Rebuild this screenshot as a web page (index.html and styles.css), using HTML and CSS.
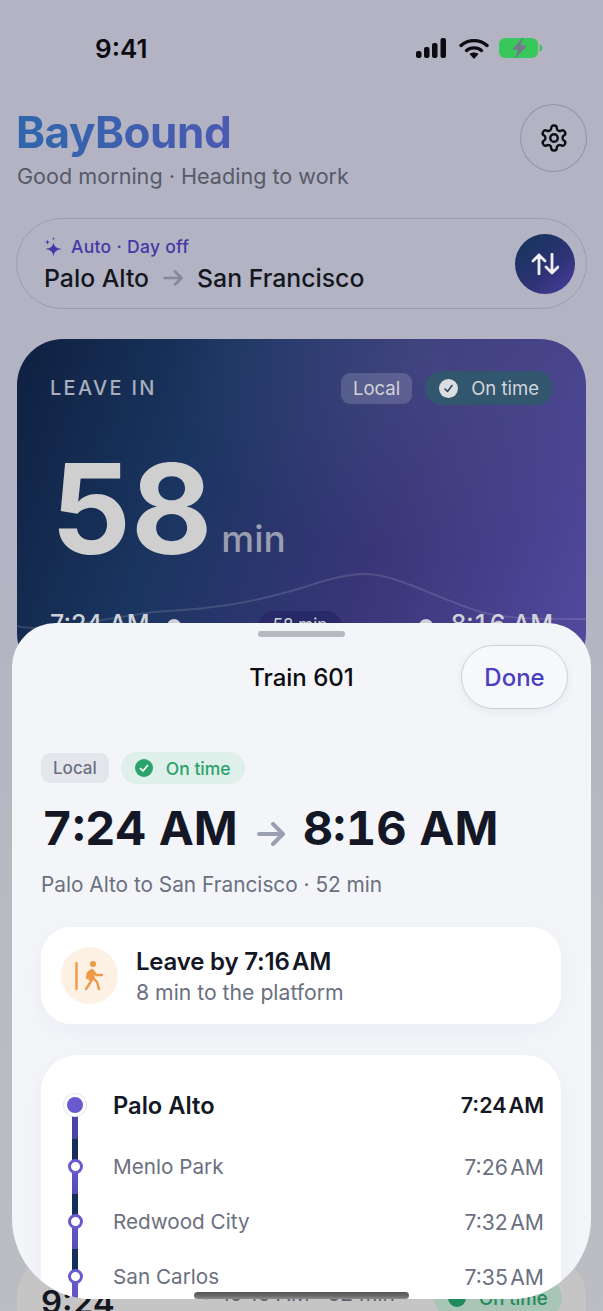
FILE: index.html
```html
<!DOCTYPE html>
<html lang="en">
<head>
<meta charset="utf-8">
<title>BayBound</title>
<link rel="stylesheet" href="styles.css">
</head>
<body>
<div class="phone">
  <div class="status">
    <span class="clock">9:41</span>
    <div class="status-icons">
      <svg class="signal" width="30" height="20" viewBox="0 0 30 20"><rect x="0" y="13" width="5.5" height="7" rx="2"/><rect x="8" y="9" width="5.5" height="11" rx="2"/><rect x="16" y="5" width="5.5" height="15" rx="2"/><rect x="24.500" y="0" width="5.500" height="20" rx="2"/></svg>
      <svg class="wifi" width="30" height="21" viewBox="0 0 30 21" fill="none"><path d="M2 7.500C9.500 1 20.500 1 28 7.500" stroke="#0b0b10" stroke-width="3.400" stroke-linecap="round"/><path d="M7.500 12.500C11.500 9 18.500 9 22.500 12.500" stroke="#0b0b10" stroke-width="3.400" stroke-linecap="round"/><path d="M15 21l-4.500-5c2.500-2 6.500-2 9 0z" fill="#0b0b10"/></svg>
      <svg class="battery" width="44" height="22" viewBox="0 0 44 22"><rect x="0" y="1" width="39" height="20" rx="6" fill="#38c75b"/><path d="M40.500 7.500c2 .5 3 2 3 3.500s-1 3-3 3.500z" fill="#38c75b"/><path d="M24.500 0L13 12.500h6L16 22l12-13.500h-6.500z" fill="#77778c"/></svg>
    </div>
  </div>

  <header class="top">
    <div>
      <h1 class="brand">BayBound</h1>
      <p class="greet">Good morning · Heading to work</p>
    </div>
    <button class="gear" aria-label="Settings">
      <svg width="30" height="30" viewBox="0 0 24 24" fill="none" stroke="#0d0d14" stroke-width="1.900" stroke-linecap="round" stroke-linejoin="round"><path d="M12.220 2h-.44a2 2 0 0 0-2 2v.18a2 2 0 0 1-1 1.730l-.43.250a2 2 0 0 1-2 0l-.15-.08a2 2 0 0 0-2.730.730l-.22.380a2 2 0 0 0 .730 2.730l.150.100a2 2 0 0 1 1 1.720v.510a2 2 0 0 1-1 1.740l-.15.090a2 2 0 0 0-.730 2.730l.220.380a2 2 0 0 0 2.730.730l.150-.08a2 2 0 0 1 2 0l.430.250a2 2 0 0 1 1 1.730V20a2 2 0 0 0 2 2h.440a2 2 0 0 0 2-2v-.18a2 2 0 0 1 1-1.730l.430-.250a2 2 0 0 1 2 0l.150.080a2 2 0 0 0 2.730-.730l.220-.390a2 2 0 0 0-.730-2.730l-.150-.080a2 2 0 0 1-1-1.740v-.500a2 2 0 0 1 1-1.740l.150-.090a2 2 0 0 0 .730-2.730l-.220-.380a2 2 0 0 0-2.730-.730l-.150.080a2 2 0 0 1-2 0l-.430-.250a2 2 0 0 1-1-1.730V4a2 2 0 0 0-2-2z"/><circle cx="12" cy="12" r="3"/></svg>
    </button>
  </header>

  <section class="route">
    <div class="route-text">
      <div class="auto">
        <svg width="18" height="20" viewBox="0 0 18 20" fill="#4438a8"><path d="M9.500 5.500c.8 4 2.500 5.500 8 6.500-5.500 1-7.200 2.500-8 7.500-.8-5-2.500-6.500-8-7.500 5.500-1 7.200-2.500 8-6.500z"/><path d="M3.500 2.500l.6 2 2 .6-2 .6-.6 2-.6-2-2-.6 2-.6zM9.500 0l.4 1.400 1.400.4-1.400.4-.4 1.400-.4-1.400-1.400-.4 1.400-.4z"/></svg>
        <span>Auto · Day off</span>
      </div>
      <div class="route-names">
        <span>Palo Alto</span>
        <svg width="20" height="16" viewBox="0 0 20 16" fill="none" stroke="#868799" stroke-width="2.600" stroke-linecap="round" stroke-linejoin="round"><path d="M1.500 8h17M12 1.500L18.500 8 12 14.500"/></svg>
        <span>San Francisco</span>
      </div>
    </div>
    <button class="swap" aria-label="Swap direction">
      <svg width="28" height="22" viewBox="0 0 28 22" fill="none" stroke="#f0f0f4" stroke-width="2.800" stroke-linecap="round" stroke-linejoin="round"><path d="M8 21V2M2 8l6-6 6 6M21 1v19M15 14l6 6 6-6"/></svg>
    </button>
  </section>

  <section class="hero">
    <svg class="wave" width="569" height="80" viewBox="0 0 569 80" fill="none"><path d="M0 57C30 64 70 52 137 43C190 40 230 36 291 17C320 7 335 5 348 5C380 5 420 30 464 43C490 50 520 50 569 50" stroke="#ffffff" stroke-opacity=".13" stroke-width="2"/></svg>
    <div class="hero-top">
      <span class="leave">LEAVE IN</span>
      <div class="hero-pills">
        <span class="pill-local-d">Local</span>
        <span class="pill-time-d">
          <svg width="19" height="19" viewBox="0 0 19 19"><circle cx="9.500" cy="9.500" r="9.500" fill="#dcdde0"/><path d="M6 10l2.500 2.500L13 6.500" fill="none" stroke="#30475f" stroke-width="1.600" stroke-linecap="round" stroke-linejoin="round"/></svg>
          <span>On time</span>
        </span>
      </div>
    </div>
    <div class="count"><span class="num">58</span><span class="unit">min</span></div>
    <div class="journey">
      <div class="j-end"><span class="j-time">7:24 AM</span><i class="j-dot"></i></div>
      <span class="j-pill">58 min</span>
      <div class="j-end"><i class="j-dot"></i><span class="j-time j-tab">8:16 AM</span></div>
    </div>
  </section>

  <section class="later">
    <span class="later-time">9:24</span>
    <span class="later-info">→ 10:16 AM · 52 min</span>
    <span class="later-pill"><i class="later-dot"></i><span>On time</span></span>
  </section>

  <div class="sheet">
    <div class="handle"></div>
    <div class="sheet-head">
      <span></span>
      <h2 class="sheet-title">Train 601</h2>
      <button class="done">Done</button>
    </div>
    <div class="sheet-body">
      <div class="tags">
        <span class="tag-local">Local</span>
        <span class="tag-time">
          <svg width="18" height="18" viewBox="0 0 18 18"><circle cx="9" cy="9" r="9" fill="#2aa36c"/><path d="M5.500 9.500l2.500 2.500 4.500-5.500" fill="none" stroke="#fff" stroke-width="1.700" stroke-linecap="round" stroke-linejoin="round"/></svg>
          <span>On time</span>
        </span>
      </div>
      <div class="times">
        <span>7:24 AM</span>
        <svg width="29" height="24" viewBox="0 0 29 24" fill="none" stroke="#9a9fb2" stroke-width="4" stroke-linecap="round" stroke-linejoin="round"><path d="M2 12h24M16 2l10 10-10 10"/></svg>
        <span>8:16 AM</span>
      </div>
      <p class="trip">Palo Alto to San Francisco · 52 min</p>
      <div class="card leave-card">
        <div class="walk">
          <svg width="34" height="32" viewBox="0 0 34 32" fill="none" stroke="#ef9a47" stroke-width="2.400" stroke-linecap="round" stroke-linejoin="round"><path d="M2.500 3v26"/><circle cx="19" cy="4" r="3" fill="#ef9a47" stroke="none"/><path d="M18 10l-4 3-1 5M18 10l1 8-3 5-4 6M19 18l4 4 2 7M19 11l3 4h6" /><path d="M15 12l4-1 .5 8-4 .5z" fill="#ef9a47"/></svg>
        </div>
        <div>
          <div class="leave-title">Leave by <span class="tight">7:16 AM</span></div>
          <div class="leave-sub">8 min to the platform</div>
        </div>
      </div>
      <div class="card stops">
        <div class="stop first"><i class="mark-on"></i><span class="stop-name">Palo Alto</span><span class="stop-time">7:24 AM</span></div>
        <div class="stop"><i class="mark"></i><span class="stop-name">Menlo Park</span><span class="stop-time">7:26 AM</span></div>
        <div class="stop"><i class="mark"></i><span class="stop-name">Redwood City</span><span class="stop-time">7:32 AM</span></div>
        <div class="stop last"><i class="mark"></i><span class="stop-name">San Carlos</span><span class="stop-time">7:35 AM</span></div>
      </div>
    </div>
  </div>
  <div class="home-bar"></div>
</div>
</body>
</html>
```
FILE: styles.css
```css
* { box-sizing: border-box; margin: 0; padding: 0; }
html, body { width: 603px; height: 1311px; overflow: hidden; }
body { font-family: Inter, "Liberation Sans", sans-serif; color: #15171f; }
button { font-family: inherit; background: none; cursor: pointer; }
i { display: block; }

.phone {
  position: relative;
  width: 603px;
  height: 1311px;
  overflow: hidden;
  padding: 0 16px;
  background: linear-gradient(180deg, #b3b3c3 0%, #b2b3c3 40%, #b9b9c2 70%, #bcbdc3 100%);
}

.status { display: flex; justify-content: space-between; align-items: center; height: 38px; margin-top: 29px; padding: 0 44px 0 79px; }
.clock { font-size: 26px; font-weight: 600; color: #0b0b10; }
.status-icons { display: flex; align-items: center; gap: 13px; }
.signal { fill: #0b0b10; }
.battery { margin-left: -3px; }

.top { display: flex; justify-content: space-between; align-items: flex-start; margin-top: 37px; }
.brand {
  font-size: 44px; font-weight: 700; line-height: 58px; letter-spacing: -0.5px; margin-top: -1px;
  background: linear-gradient(90deg, #2f66ab 0%, #5c52b6 100%);
  -webkit-background-clip: text; background-clip: text; color: transparent;
}
.greet { font-size: 21.600px; line-height: 28px; color: #565a69; margin-left: 1px; margin-top: 1px; }
.gear { width: 67px; height: 68px; border-radius: 50%; border: 1px solid #9394a6; display: flex; align-items: center; justify-content: center; }

.route {
  display: flex; align-items: center; justify-content: space-between;
  height: 91px; margin-top: 28px; padding: 0 11px 0 27px;
  border: 1.500px solid #9c9dad; border-radius: 46px;
}
.route-text { padding-top: 2px; }
.auto { display: flex; align-items: center; gap: 9px; color: #4438a8; font-size: 17.500px; font-weight: 500; line-height: 24px; letter-spacing: .3px; }
.route-names { display: flex; align-items: center; gap: 14px; font-size: 24.800px; font-weight: 500; line-height: 32px; color: #15171f; margin-top: 3px; }
.swap {
  width: 60px; height: 60px; border: 0; border-radius: 50%;
  display: flex; align-items: center; justify-content: center;
  background: linear-gradient(140deg, #15355c 10%, #2f3277 60%, #4a3fa0 100%);
}

.hero {
  position: relative;
  height: 340px; margin-top: 30px; margin-left: 1px; margin-right: 1px;
  padding: 33px 33px 0;
  border-radius: 46px;
  overflow: hidden;
  background:
    radial-gradient(260px 200px at 72% 5%, rgba(90, 100, 150, .3), transparent 100%),
    linear-gradient(110deg, #0f2040 0%, #1a3560 30%, #3a3679 64%, #534a9f 100%);
}
.wave { position: absolute; left: 0; top: 230px; }
.hero-top { display: flex; justify-content: space-between; align-items: center; height: 34px; margin-top: -1px; }
.leave { font-size: 20px; font-weight: 500; letter-spacing: 2.300px; color: #a9aebb; margin-top: -1px; }
.hero-pills { display: flex; align-items: center; gap: 13px; }
.pill-local-d { height: 31px; padding: 0 12px; border-radius: 9px; background: rgba(255, 255, 255, .16); color: #d2d3d9; font-size: 18.500px; line-height: 31px; }
.pill-time-d { display: flex; align-items: center; gap: 13px; height: 34px; padding: 0 14px; border-radius: 17px; background: #33566f; color: #d2d5da; font-size: 18.500px; }
.count { display: flex; align-items: flex-start; margin-top: 29px; height: 155px; }
.num { font-size: 125px; font-weight: 700; line-height: 150px; color: #cfcfcf; margin-left: 1px; }
.unit { font-size: 37px; line-height: 44px; font-weight: 500; color: #9a9eb0; margin-top: 83px; margin-left: 9px; }
.journey { display: flex; align-items: flex-start; justify-content: space-between; margin-top: 22px; color: #cfd1d8; }
.j-end { display: flex; align-items: flex-start; gap: 17px; }
.j-time { font-size: 25px; line-height: 30px; font-weight: 500; margin-top: -2px; }
.j-tab { font-variant-numeric: tabular-nums; }
.j-dot { width: 14px; height: 14px; margin-top: 8px; border-radius: 50%; background: #cfd1d8; }
.j-pill { width: 84px; height: 40px; padding-top: 4px; text-align: center; font-size: 17px; line-height: 21px; border-radius: 16px; background: #272a66; }

.later {
  position: relative;
  height: 200px; margin-top: 577px; margin-left: 1px; margin-right: 1px;
  border-radius: 40px; background: #c5c5c6;
}
.later-time { position: absolute; left: 24px; top: 26px; font-size: 33px; font-weight: 600; line-height: 40px; }
.later-info { position: absolute; left: 178px; top: 25px; font-size: 21px; color: #60636f; white-space: nowrap; }
.later-pill { position: absolute; right: 24px; top: 24px; display: flex; align-items: center; gap: 13px; width: 128px; height: 36px; padding: 0 14px; border-radius: 18px; background: #a8c5b6; color: #1f8a5c; font-size: 18.500px; font-weight: 500; white-space: nowrap; }
.later-dot { width: 18px; height: 18px; border-radius: 50%; background: #1f8a5c; }

.sheet {
  position: absolute; left: 12px; top: 623px; width: 579px; height: 676px;
  overflow: hidden;
  background: #f3f5f9;
  border-radius: 44px 44px 80px 80px;
}
.handle { width: 87px; height: 6px; margin: 8px auto 0; border-radius: 3px; background: #b7b8c0; }
.sheet-head { display: grid; grid-template-columns: 1fr auto 1fr; align-items: center; margin-top: 8px; padding: 0 23px; }
.sheet-title { font-size: 24px; font-weight: 500; color: #0b0b10; }
.done {
  justify-self: end; width: 107px; height: 64px; border-radius: 32px;
  border: 1px solid #cfd0d6; background: #f7f8fb; box-shadow: 0 3px 10px rgba(30, 30, 60, .06);
  color: #4a3fc0; font-size: 24px; font-weight: 500;
}
.sheet-body { padding: 0 30px 0 29px; }
.tags { display: flex; align-items: center; gap: 12px; margin-top: 43px; }
.tag-local { height: 30px; padding: 0 12px; border-radius: 9px; background: #e4e6ec; color: #6b7184; font-size: 17px; font-weight: 500; line-height: 30px; }
.tag-time { display: flex; align-items: center; gap: 13px; height: 32px; padding: 0 14px; border-radius: 16px; background: #dfefe9; color: #2aa36c; font-size: 17.500px; font-weight: 500; }
.times { display: flex; align-items: center; gap: 19px; margin-top: 8px; font-size: 47.100px; font-weight: 700; line-height: 72px; color: #141826; margin-left: 1px; font-variant-numeric: tabular-nums; }
.times svg { margin-top: 12px; margin-right: -2px; }
.trip { font-size: 20.800px; line-height: 28px; color: #6b7080; margin-top: 7px; }

.card { background: #fff; box-shadow: 0 6px 24px rgba(40, 50, 90, .04); }
.leave-card { display: flex; align-items: center; gap: 18px; height: 97px; margin-top: 28px; padding: 0 20px; border-radius: 30px; }
.walk { width: 57px; height: 57px; border-radius: 50%; background: #fdf0e4; display: flex; align-items: center; justify-content: center; padding-left: 3px; }
.leave-title { font-size: 24px; font-weight: 600; line-height: 32px; color: #141826; letter-spacing: -.2px; }
.tight { word-spacing: -3.500px; }
.leave-sub { font-size: 21.200px; line-height: 28px; color: #6b7080; }

.stops { margin-top: 31px; height: 300px; padding: 22px 17px 0 23px; border-radius: 36px; }
.stop { position: relative; display: flex; align-items: center; height: 55px; font-size: 20.700px; color: #6b7080; }
.stop.first { height: 56px; margin-bottom: 6px; font-weight: 600; font-size: 23.700px; color: #141826; }
.stop::after {
  content: ""; position: absolute; left: 8px; top: 50%; width: 6px; height: 100%;
  background: linear-gradient(180deg, #6458c8 0, #574dba calc(100% - 28px), #14305a calc(100% - 28px));
}
.stop.first::after { height: calc(100% + 6px); top: 50%; background: linear-gradient(180deg, #4a45a5 0, #4a45a5 calc(100% - 28px), #14305a calc(100% - 28px)); }
.stop.last::after { background: #6458c8; }
.mark, .mark-on { position: absolute; z-index: 1; border-radius: 50%; }
.mark { left: 3.500px; top: 20px; width: 15px; height: 15px; background: #fff; border: 3px solid #6a5ad0; }
.mark-on { left: 0; top: 17px; width: 22px; height: 22px; background: #6a5ad0; border: 3px solid #fff; box-shadow: 0 0 0 1px #e6e6f4; }
.stop-name { margin-left: 49px; flex: 1; }
.stop-time { font-size: 21.200px; word-spacing: -3.500px; }
.stop.first .stop-time { font-size: 21.500px; }

.home-bar { position: absolute; left: 194px; top: 1292px; width: 215px; height: 7px; border-radius: 4px; background: linear-gradient(180deg, #555 0%, #6c6c6c 60%, #8d8d8d 100%); }
```
